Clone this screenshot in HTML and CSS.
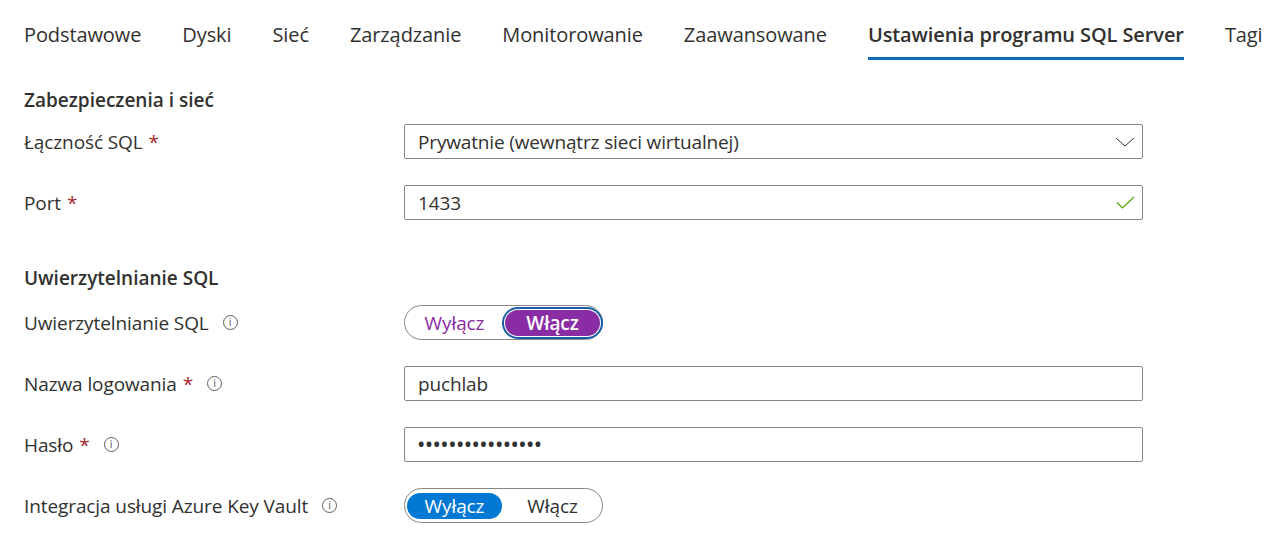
FILE: index.html
```html
<!DOCTYPE html>
<html lang="pl">
<head>
<meta charset="utf-8">
<title>Ustawienia programu SQL Server</title>
<link rel="stylesheet" href="styles.css">
</head>
<body>
<nav class="tabs">
  <span class="tab">Podstawowe</span>
  <span class="tab">Dyski</span>
  <span class="tab">Sieć</span>
  <span class="tab">Zarządzanie</span>
  <span class="tab">Monitorowanie</span>
  <span class="tab">Zaawansowane</span>
  <span class="tab active">Ustawienia programu SQL Server</span>
  <span class="tab">Tagi</span>
</nav>

<h2 class="section first">Zabezpieczenia i sieć</h2>
<div class="form">
  <div class="label">Łączność SQL <span class="req">*</span></div>
  <div class="field">
    <span class="value">Prywatnie (wewnątrz sieci wirtualnej)</span>
    <svg class="ico" width="20" height="10" viewBox="0 0 20 10"><path d="M1 1 L10 9 L19 1" fill="none" stroke="#323130" stroke-width="1"/></svg>
  </div>
  <div class="label">Port <span class="req">*</span></div>
  <div class="field">
    <span class="value">1433</span>
    <svg class="ico" width="19" height="13" viewBox="0 0 19 13"><path d="M1 6.5 L6.5 12 L18 1" fill="none" stroke="#57a300" stroke-width="1.2"/></svg>
  </div>
</div>

<h2 class="section second">Uwierzytelnianie SQL</h2>
<div class="form">
  <div class="label">Uwierzytelnianie SQL <span class="info">i</span></div>
  <div class="toggle">
    <span class="seg purple-text">Wyłącz</span>
    <span class="seg on-purple">Włącz</span>
  </div>
  <div class="label">Nazwa logowania <span class="req">*</span> <span class="info">i</span></div>
  <div class="field"><span class="value">puchlab</span></div>
  <div class="label">Hasło <span class="req">*</span> <span class="info">i</span></div>
  <div class="field"><span class="value dots">••••••••••••••••</span></div>
  <div class="label">Integracja usługi Azure Key Vault <span class="info">i</span></div>
  <div class="toggle">
    <span class="seg on-blue">Wyłącz</span>
    <span class="seg">Włącz</span>
  </div>
</div>
</body>
</html>
```

FILE: styles.css
```css
* { box-sizing: border-box; }
html, body { margin: 0; padding: 0; background: #fff; }
body {
  font-family: "Open Sans", "Noto Sans", sans-serif;
  color: #323130;
  padding-left: 24px;
}
.tabs {
  display: flex;
  gap: 41px;
  padding-top: 22px;
  white-space: nowrap;
}
.tab {
  font-size: 20px;
  line-height: 26px;
  padding-bottom: 9px;
  border-bottom: 3px solid transparent;
  letter-spacing: -0.1px;
}
.tab.active {
  font-weight: 600;
  border-bottom-color: #0f6cbd;
}
.section {
  font-size: 19px;
  font-weight: 600;
  line-height: 26px;
  margin: 0;
}
.section.first { margin-top: 27px; margin-bottom: 11px; }
.section.second { margin-top: 45px; margin-bottom: 14px; }
.form {
  display: grid;
  grid-template-columns: 380px 739px;
  row-gap: 26px;
  align-items: center;
}
.label {
  font-size: 19px;
  line-height: 26px;
  display: flex;
  align-items: center;
  letter-spacing: -0.1px;
}
.req { color: #a4262c; margin-left: 6px; }
.info {
  display: inline-flex;
  width: 15px;
  height: 15px;
  border: 1px solid #605e5c;
  border-radius: 50%;
  font-size: 10px;
  line-height: 1;
  color: #605e5c;
  align-items: center;
  justify-content: center;
  margin-left: 14px;
  font-family: "DejaVu Sans", sans-serif;
  letter-spacing: 0;
}
.field {
  height: 35px;
  border: 1px solid #8a8886;
  border-radius: 2px;
  display: flex;
  align-items: center;
  justify-content: space-between;
  padding: 0 7px 0 13px;
  font-size: 19px;
}
.value { letter-spacing: -0.15px; }
.dots { font-size: 17px; font-weight: 700; letter-spacing: 1.4px; }
.ico { display: block; }
.toggle {
  width: 199px;
  height: 35px;
  border: 1px solid #8a8886;
  border-radius: 18px;
  display: flex;
  align-items: center;
  gap: 3px;
  padding: 0 2px;
}
.seg {
  width: 96px;
  height: 26px;
  border-radius: 13px;
  display: flex;
  align-items: center;
  justify-content: center;
  font-size: 19px;
  letter-spacing: -0.1px;
}
.purple-text { color: #8a2da5; }
.on-purple {
  background: #8a2da5;
  color: #fff;
  font-weight: 600;
  box-shadow: 0 0 0 1px #fff, 0 0 0 3px #1a5fa6;
}
.on-blue { background: #0078d4; color: #fff; }
```
